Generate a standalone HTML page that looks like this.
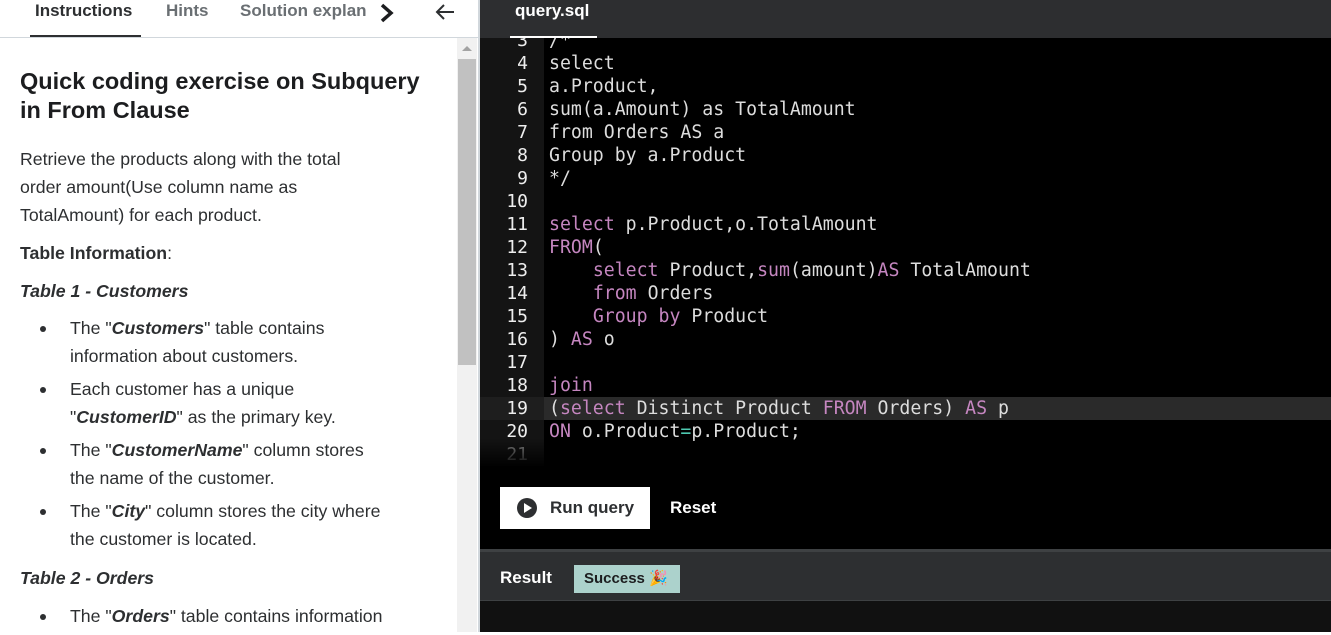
<!DOCTYPE html>
<html><head><style>
*{margin:0;padding:0;box-sizing:border-box}
body{width:1331px;height:632px;overflow:hidden;font-family:"Liberation Sans",sans-serif;background:#fff;position:relative}
#left{position:absolute;left:0;top:0;width:480px;height:632px;background:#fff;border-right:2px solid #d1d7dc}
#tabs{height:38px;border-bottom:1px solid #d1d7dc;position:relative}
.tab{position:absolute;top:0;font-weight:bold;font-size:17px;color:#6a6f73;line-height:22px}
#content{position:absolute;left:20px;top:67px;width:430px;color:#2d2f31;white-space:nowrap}
h2{font-size:23.5px;line-height:29px;font-weight:bold;color:#1c1d1f}
p{font-size:17.7px;line-height:28px}
ul{list-style:none;margin-left:20px}
li{position:relative;padding-left:30px;font-size:17.7px;line-height:28px;margin-bottom:5px}
li:before{content:"";position:absolute;left:0;top:12px;width:6px;height:6px;border-radius:50%;background:#2d2f31}
#sb{position:absolute;left:457px;top:38px;width:20px;height:594px;background:#f1f1f1}
#right{position:absolute;left:480px;top:0;width:851px;height:632px;background:#000}
#ehead{height:38px;background:#2d2e30;position:relative}
#code{position:absolute;top:38px;left:0;width:851px;height:430px;overflow:hidden}
.ln{position:absolute;left:0;width:64px;height:23px;background:#141414;color:#eee;text-align:right;padding-right:16px;font:18px/24px "DejaVu Sans Mono",monospace}
.cl{position:absolute;left:69px;font:18.2px/24px "DejaVu Sans Mono",monospace;color:#ddd;white-space:pre}
.k{color:#c586c0}
</style></head><body>
<div id="left">
 <div id="tabs">
  <div class="tab" style="left:35px;color:#2d2f31">Instructions</div>
  <div style="position:absolute;left:30px;top:35px;width:111px;height:2px;background:#2d2f31"></div>
  <div class="tab" style="left:166px">Hints</div>
  <div class="tab" style="left:240px">Solution explan</div>
  <svg style="position:absolute;left:376px;top:2px" width="20" height="22"><path d="M6 3l9 8-9 8" stroke="#1c1d1f" stroke-width="3.5" fill="none"/></svg>
  <svg style="position:absolute;left:434px;top:3px" width="22" height="18"><path d="M20 9H3M10 2L3 9l7 7" stroke="#2d2f31" stroke-width="2" fill="none"/></svg>
 </div>
 <div id="sb"><div style="position:absolute;left:1px;top:21px;width:18px;height:306px;background:#c1c1c1"></div><div style="position:absolute;left:5px;top:8px;border:5px solid transparent;border-bottom:5px solid #a3a3a3;border-top:0"></div></div>
 <div id="content">
  <h2>Quick coding exercise on Subquery<br>in From Clause</h2>
  <p style="margin-top:20px">Retrieve the products along with the total<br>order amount(Use column name as<br>TotalAmount) for each product.</p>
  <p style="margin-top:10px"><b>Table Information</b>:</p>
  <p style="margin-top:10px"><b><i>Table 1 - Customers</i></b></p>
  <ul style="margin-top:9px">
   <li>The "<b><i>Customers</i></b>" table contains<br>information about customers.</li>
   <li>Each customer has a unique<br>"<b><i>CustomerID</i></b>" as the primary key.</li>
   <li>The "<b><i>CustomerName</i></b>" column stores<br>the name of the customer.</li>
   <li>The "<b><i>City</i></b>" column stores the city where<br>the customer is located.</li>
  </ul>
  <p style="margin-top:11px"><b><i>Table 2 - Orders</i></b></p>
  <ul style="margin-top:10px"><li>The "<b><i>Orders</i></b>" table contains information</li></ul>
 </div>
</div>
<div id="right">
 <div id="ehead"><div style="position:absolute;left:35px;top:0;color:#fff;font-weight:bold;font-size:17px;line-height:22px">query.sql</div><div style="position:absolute;left:30px;top:36px;width:87px;height:2px;background:#fff"></div></div>
 <div id="code">
  <div style="position:absolute;left:0;top:359px;width:851px;height:23px;background:#2a2a2a"></div>
  <div class="ln" style="top:-9px">3</div><div class="cl" style="top:-9px">/*</div>
  <div class="ln" style="top:14px">4</div><div class="cl" style="top:14px">select</div>
  <div class="ln" style="top:37px">5</div><div class="cl" style="top:37px">a.Product,</div>
  <div class="ln" style="top:60px">6</div><div class="cl" style="top:60px">sum(a.Amount) as TotalAmount</div>
  <div class="ln" style="top:83px">7</div><div class="cl" style="top:83px">from Orders AS a</div>
  <div class="ln" style="top:106px">8</div><div class="cl" style="top:106px">Group by a.Product</div>
  <div class="ln" style="top:129px">9</div><div class="cl" style="top:129px">*/</div>
  <div class="ln" style="top:152px">10</div>
  <div class="ln" style="top:175px">11</div><div class="cl" style="top:175px"><span class="k">select</span> p.Product,o.TotalAmount</div>
  <div class="ln" style="top:198px">12</div><div class="cl" style="top:198px"><span class="k">FROM</span>(</div>
  <div class="ln" style="top:221px">13</div><div class="cl" style="top:221px">    <span class="k">select</span> Product,<span class="k">sum</span>(amount)<span class="k">AS</span> TotalAmount</div>
  <div class="ln" style="top:244px">14</div><div class="cl" style="top:244px">    <span class="k">from</span> Orders</div>
  <div class="ln" style="top:267px">15</div><div class="cl" style="top:267px">    <span class="k">Group by</span> Product</div>
  <div class="ln" style="top:290px">16</div><div class="cl" style="top:290px">) <span class="k">AS</span> o</div>
  <div class="ln" style="top:313px">17</div>
  <div class="ln" style="top:336px">18</div><div class="cl" style="top:336px"><span class="k">join</span></div>
  <div class="ln" style="top:359px;background:#1e1e1e">19</div><div class="cl" style="top:359px">(<span class="k">select</span> Distinct Product <span class="k">FROM</span> Orders) <span class="k">AS</span> p</div>
  <div class="ln" style="top:382px">20</div><div class="cl" style="top:382px"><span class="k">ON</span> o.Product<span style="color:#4ec9b0">=</span>p.Product;</div>
  <div class="ln" style="top:405px;color:#888">21</div>
  <div style="position:absolute;left:0;top:400px;width:851px;height:30px;background:linear-gradient(rgba(0,0,0,0),#000)"></div>
 </div>
 <div style="position:absolute;left:20px;top:487px;width:150px;height:42px;background:#fff">
  <svg style="position:absolute;left:16px;top:10px" width="22" height="22"><circle cx="11" cy="11" r="10" fill="#2d2f31"/><path d="M8 6l8 5-8 5z" fill="#fff"/></svg>
  <div style="position:absolute;left:50px;top:11px;font-weight:bold;font-size:17px;color:#2d2f31">Run query</div>
 </div>
 <div style="position:absolute;left:190px;top:498px;font-weight:bold;font-size:17px;color:#fff">Reset</div>
 <div style="position:absolute;left:0;top:549px;width:851px;height:52px;background:#2d2f31;border-top:3px solid #3e4143;border-bottom:1px solid #3e4143">
  <div style="position:absolute;left:20px;top:16px;font-weight:bold;font-size:17px;color:#fff">Result</div>
  <div style="position:absolute;left:94px;top:13px;width:106px;height:28px;background:#acd2cc;color:#1c1d1f;font-weight:bold;font-size:15px;line-height:28px;padding-left:10px">Success 🎉</div>
 </div>
 <div style="position:absolute;left:0;top:601px;width:851px;height:31px;background:#111"></div>
</div>
</body></html>
